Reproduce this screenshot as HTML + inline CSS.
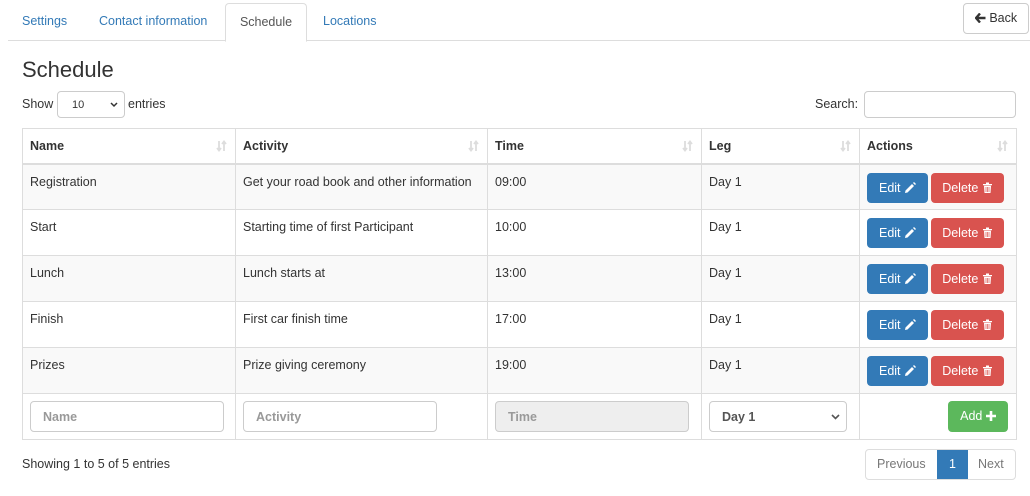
<!DOCTYPE html>
<html><head><style>
*{box-sizing:border-box}
body{margin:0;width:1030px;height:496px;font-family:"Liberation Sans",Arial,sans-serif;font-size:12.5px;color:#333;background:#fff;position:relative;overflow:hidden}
.abs{position:absolute}
.tabs{left:8px;top:0;width:1022px;height:41px;border-bottom:1px solid #ddd}
.tab{position:absolute;top:14px;color:#337ab7}
.tab.act{top:3px;left:225px;width:82px;height:39px;border:1px solid #ddd;border-bottom-color:#fff;border-radius:4px 4px 0 0;background:#fff;color:#555;text-align:center;padding-top:11px}
.back{left:963px;top:3px;width:66px;height:31px;border:1px solid #ccc;border-radius:4px;text-align:center;line-height:29px;color:#333}
h1{position:absolute;left:22px;top:57px;margin:0;font-size:22px;font-weight:400;color:#333}
.sel{border:1px solid #ccc;border-radius:4px;background:#fff}
table{position:absolute;left:22px;top:128px;width:994px;border-collapse:collapse;table-layout:fixed}
td,th{border:1px solid #ddd;padding:0 7px;text-align:left;vertical-align:top;white-space:nowrap}
th{height:35px;vertical-align:middle;font-weight:bold;border-bottom:2px solid #ddd;position:relative}
th svg{position:absolute;right:8px;top:11px}
td{height:46px;padding-top:10px}
tr.g td{background:#f9f9f9}
.btn{display:inline-block;height:30px;line-height:30px;border-radius:4px;color:#fff;text-align:center;vertical-align:top}
.btn svg{vertical-align:-1px}
.e{background:#337ab7;width:61px;margin-top:-2px}
.d{background:#d9534f;width:73px;margin-left:3px;margin-top:-2px}
.inp{height:31px;border:1px solid #ccc;border-radius:4px;font-weight:bold;color:#999;padding:8px 12px}
</style></head><body>
<svg width="0" height="0" style="position:absolute"><defs>
<g id="pen"><path d="M1 11 L1.5 8.5 L8 2 L10 4 L3.5 10.5 Z M9 1 L10 0 L12 2 L11 3 Z" fill="#fff"/></g>
<g id="trash"><path d="M1 2 H10 V3.3 H1 Z M4 0.5 H7 V2 H4 Z M2 3.8 H9 L8.5 11 H2.5 Z" fill="#fff"/><path d="M4 5 V10 M5.5 5 V10 M7 5 V10" stroke="#d9534f" stroke-width="0.7"/></g>
<g id="sort"><path d="M3 1 V10 M1 8 L3 10.5 L5 8 M8 11 V2 M6 4 L8 1.5 L10 4" stroke="#ddd" stroke-width="1.8" fill="none"/></g>
</defs></svg>
<div class="abs tabs"></div>
<div class="tab" style="left:22px">Settings</div>
<div class="tab" style="left:99px">Contact information</div>
<div class="tab act">Schedule</div>
<div class="tab" style="left:323px">Locations</div>
<div class="abs back"><svg width="11" height="10" viewBox="0 0 11 10" style="vertical-align:-1px"><path d="M5 0.5 L1 5 L5 9.5 M1.2 5 H10.5" stroke="#333" stroke-width="2.4" fill="none"/></svg> Back</div>
<h1>Schedule</h1>
<div class="abs" style="left:22px;top:97px">Show</div>
<div class="abs sel" style="left:57px;top:91px;width:68px;height:27px;font-size:11px;padding:7px 0 0 14px">10<svg style="position:absolute;right:6px;top:10px" width="8" height="6"><path d="M1 1 L4 4 L7 1" stroke="#333" stroke-width="1.5" fill="none"/></svg></div>
<div class="abs" style="left:128px;top:97px">entries</div>
<div class="abs" style="left:815px;top:97px">Search:</div>
<div class="abs sel" style="left:864px;top:91px;width:152px;height:27px"></div>
<table>
<colgroup><col style="width:213px"><col style="width:252px"><col style="width:214px"><col style="width:158px"><col style="width:157px"></colgroup>
<tr><th>Name<svg width="11" height="12"><use href="#sort"/></svg></th><th>Activity<svg width="11" height="12"><use href="#sort"/></svg></th><th>Time<svg width="11" height="12"><use href="#sort"/></svg></th><th>Leg<svg width="11" height="12"><use href="#sort"/></svg></th><th>Actions<svg width="11" height="12"><use href="#sort"/></svg></th></tr>
<tr class="g"><td>Registration</td><td>Get your road book and other information</td><td>09:00</td><td>Day 1</td><td><span class="btn e">Edit <svg width="12" height="11"><use href="#pen"/></svg></span><span class="btn d">Delete <svg width="11" height="11"><use href="#trash"/></svg></span></td></tr>
<tr><td>Start</td><td>Starting time of first Participant</td><td>10:00</td><td>Day 1</td><td><span class="btn e">Edit <svg width="12" height="11"><use href="#pen"/></svg></span><span class="btn d">Delete <svg width="11" height="11"><use href="#trash"/></svg></span></td></tr>
<tr class="g"><td>Lunch</td><td>Lunch starts at</td><td>13:00</td><td>Day 1</td><td><span class="btn e">Edit <svg width="12" height="11"><use href="#pen"/></svg></span><span class="btn d">Delete <svg width="11" height="11"><use href="#trash"/></svg></span></td></tr>
<tr><td>Finish</td><td>First car finish time</td><td>17:00</td><td>Day 1</td><td><span class="btn e">Edit <svg width="12" height="11"><use href="#pen"/></svg></span><span class="btn d">Delete <svg width="11" height="11"><use href="#trash"/></svg></span></td></tr>
<tr class="g"><td>Prizes</td><td>Prize giving ceremony</td><td>19:00</td><td>Day 1</td><td><span class="btn e">Edit <svg width="12" height="11"><use href="#pen"/></svg></span><span class="btn d">Delete <svg width="11" height="11"><use href="#trash"/></svg></span></td></tr>
<tr><td style="padding-top:7px"><div class="inp" style="width:194px">Name</div></td><td style="padding-top:7px"><div class="inp" style="width:194px">Activity</div></td><td style="padding-top:7px"><div class="inp" style="width:194px;background:#eee">Time</div></td><td style="padding-top:7px"><div class="inp" style="width:138px;color:#555;position:relative">Day 1<svg style="position:absolute;right:6px;top:12px" width="9" height="6"><path d="M1 1 L4.5 4.5 L8 1" stroke="#555" stroke-width="1.6" fill="none"/></svg></div></td><td style="padding-top:7px;text-align:right"><span class="btn" style="background:#5cb85c;width:60px;margin-right:1px;height:31px;line-height:31px">Add <svg width="10" height="10" style="vertical-align:-1px"><path d="M5 0 V10 M0 5 H10" stroke="#fff" stroke-width="2.6"/></svg></span></td></tr>
</table>
<div class="abs" style="left:22px;top:457px">Showing 1 to 5 of 5 entries</div>
<div class="abs" style="left:865px;top:449px;width:151px;height:31px;border:1px solid #ddd;border-radius:4px;overflow:hidden;color:#777;line-height:29px">
<span style="position:absolute;left:11px">Previous</span>
<span style="position:absolute;left:71px;width:31px;height:31px;top:-1px;background:#337ab7;color:#fff;text-align:center;line-height:31px">1</span>
<span style="position:absolute;left:112px">Next</span></div>
</body></html>
